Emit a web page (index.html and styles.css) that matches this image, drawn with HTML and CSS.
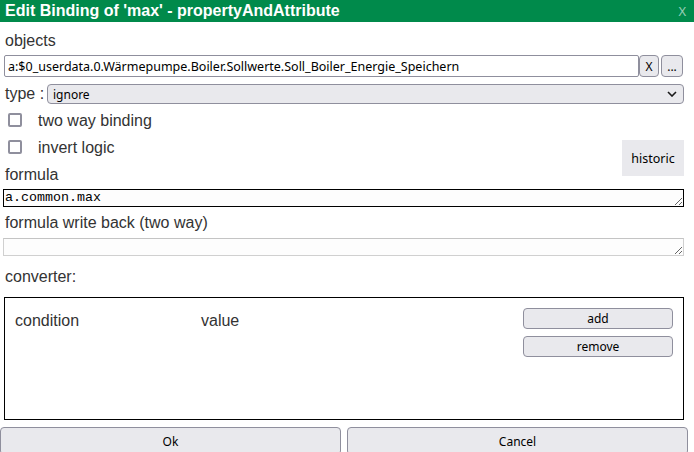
FILE: index.html
```html
<!DOCTYPE html>
<html>
<head>
<meta charset="utf-8">
<link rel="stylesheet" href="styles.css">
</head>
<body>
<div class="titlebar">
  <span class="title">Edit Binding of 'max' - propertyAndAttribute</span>
  <span class="close">X</span>
</div>
<div class="label lbl-objects">objects</div>
<div class="obj-row">
  <input class="obj-input" type="text" value="a:$0_userdata.0.Wärmepumpe.Boiler.Sollwerte.Soll_Boiler_Energie_Speichern">
  <button class="btn btn-x">X</button>
  <button class="btn btn-dots">...</button>
</div>
<div class="type-row">
  <span class="label type-label">type :</span>
  <div class="select">
    <span>ignore</span>
    <svg class="chev" width="10" height="6" viewBox="0 0 10 6"><path d="M1 1 L5 5 L9 1" fill="none" stroke="#1a1a1a" stroke-width="1.6"/></svg>
  </div>
</div>
<div class="check-row"><span class="cb"></span><span class="label">two way binding</span></div>
<div class="mid">
  <div class="mid-left">
    <div class="check-row"><span class="cb"></span><span class="label">invert logic</span></div>
    <div class="label lbl-formula">formula</div>
  </div>
  <button class="historic">historic</button>
</div>
<textarea class="ta ta-focus" rows="1">a.common.max</textarea>
<div class="label lbl-back">formula write back (two way)</div>
<textarea class="ta ta-plain" rows="1"></textarea>
<div class="label lbl-conv">converter:</div>
<div class="conv">
  <div class="conv-head">
    <span class="col-cond">condition</span>
    <span class="col-val">value</span>
  </div>
  <div class="conv-btns">
    <button class="btn conv-btn">add</button>
    <button class="btn conv-btn">remove</button>
  </div>
</div>
<div class="footer">
  <button class="btn foot-btn">Ok</button>
  <button class="btn foot-btn">Cancel</button>
</div>
</body>
</html>
```
FILE: styles.css
```css
* { box-sizing: border-box; }
html, body { margin: 0; padding: 0; }
body {
  width: 694px;
  height: 452px;
  overflow: hidden;
  background: #fff;
  font-family: "Liberation Sans", Arial, sans-serif;
  color: #333;
}
.titlebar {
  height: 22px;
  background: #008a4b;
  color: #fff;
  display: flex;
  justify-content: space-between;
  align-items: center;
  padding: 0 8px 0 5px;
}
.title { font-weight: bold; font-size: 16px; line-height: 22px; }
.close {
  font-family: "Noto Sans", sans-serif;
  font-size: 13px;
  color: rgba(255, 255, 255, 0.6);
}
.label { font-size: 16px; line-height: 18px; }
.lbl-objects { margin: 10px 0 5px 5px; }
.obj-row { display: flex; height: 22px; margin-left: 4px; }
.obj-input {
  width: 635px;
  height: 22px;
  border: 1px solid #8f8f9d;
  border-radius: 2px;
  padding: 0 3px;
  font-family: "Noto Sans", sans-serif;
  font-size: 12.5px;
  color: #000;
  background: #fff;
  outline: none;
}
.btn {
  background: #e9e9ed;
  border: 1px solid #8f8f9d;
  border-radius: 4px;
  font-family: "Noto Sans", sans-serif;
  font-size: 12px;
  color: #000;
  padding: 0;
}
.btn-x { width: 20px; height: 22px; }
.btn-dots { width: 22px; height: 22px; margin-left: 2px; }
.type-row { display: flex; align-items: center; margin-top: 7px; height: 20px; }
.type-label { margin-left: 5px; width: 42px; }
.select {
  width: 637px;
  height: 20px;
  background: #e9e9ed;
  border: 1px solid #8f8f9d;
  border-radius: 4px;
  display: flex;
  align-items: center;
  justify-content: space-between;
  padding: 0 6px 0 5px;
  font-family: "Noto Sans", sans-serif;
  font-size: 12px;
  color: #000;
}
.check-row { display: flex; align-items: flex-start; height: 27px; line-height: 26px; }
.type-row + .check-row { margin-top: 4px; }
.check-row .label { line-height: 26px; }
.cb {
  width: 14px;
  height: 14px;
  border: 2px solid #8f8f9d;
  border-radius: 2px;
  margin: 5px 16px 0 8px;
  flex: none;
}
.mid { display: flex; justify-content: space-between; align-items: flex-start; }
.lbl-formula { margin: 4px 0 5px 5px; }
.historic {
  width: 62px;
  height: 36px;
  margin: 5px 10px 0 0;
  background: #e9e9ed;
  border: none;
  font-family: "Noto Sans", sans-serif;
  font-size: 12.5px;
  color: #000;
  padding: 0;
}
.ta {
  display: block;
  width: 681px;
  height: 18px;
  margin-left: 3px;
  padding: 0 1px;
  font-family: "Liberation Mono", monospace;
  font-size: 13.33px;
  line-height: 16px;
  color: #000;
  background: #fdfdfd;
  resize: both;
  overflow: hidden;
  outline: none;
}
.ta-focus { border: 1px solid #000; }
.ta-plain { border: 1px solid #d0d0d0; border-top-color: #c4c4c4; }
.lbl-back { margin: 7px 0 6px 5px; }
.lbl-conv { margin: 12px 0 11px 5px; }
.conv {
  width: 680px;
  height: 123px;
  margin-left: 4px;
  border: 1px solid #000;
  display: flex;
  justify-content: space-between;
  align-items: flex-start;
}
.conv-head { display: flex; padding: 14px 0 0 10px; font-size: 16px; line-height: 18px; }
.col-cond { width: 186px; }
.conv-btns { display: flex; flex-direction: column; gap: 7px; margin: 10px 10px 0 0; }
.conv-btn { width: 150px; height: 21px; }
.footer { display: flex; gap: 6px; margin-top: 7px; }
.foot-btn { width: 341px; height: 28px; }
```
